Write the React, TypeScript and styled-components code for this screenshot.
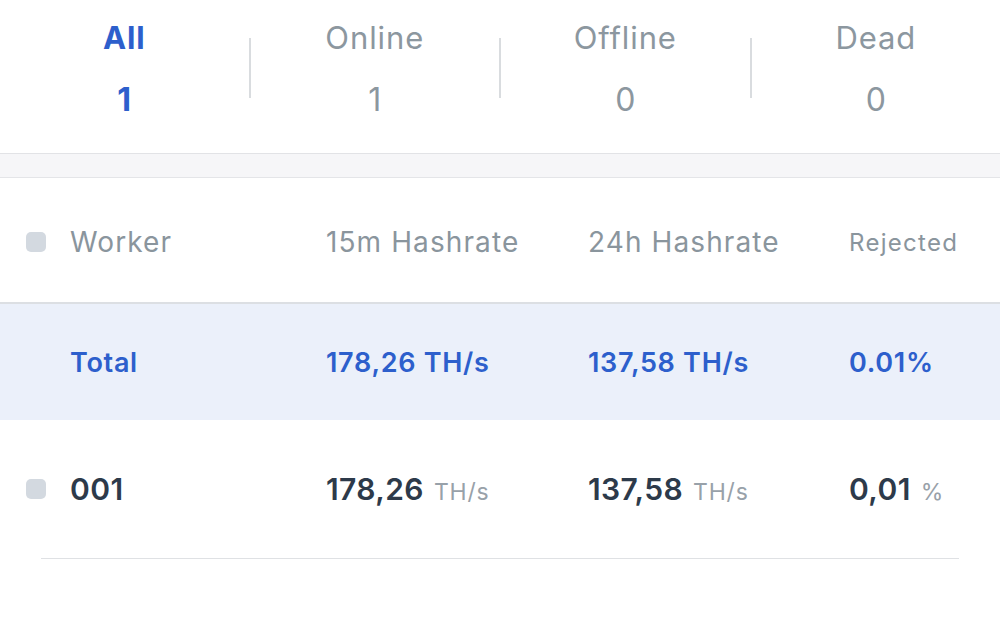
import * as React from 'react';
import styled, { createGlobalStyle } from 'styled-components';

const GlobalStyle = createGlobalStyle`
  html, body {
    margin: 0;
    padding: 0;
    background: #ffffff;
  }
  body {
    font-family: Inter, 'Open Sans', 'Liberation Sans', sans-serif;
    -webkit-font-smoothing: antialiased;
  }
`;

const Page = styled.div`
  width: 1000px;
  height: 627px;
  overflow: hidden;
  background: #fff;
`;

const Tabs = styled.div`
  display: flex;
  height: 153px;
`;

const Tab = styled.div<{ $active?: boolean }>`
  flex: 1;
  display: flex;
  flex-direction: column;
  align-items: center;
  padding-top: 18px;
  gap: 22px;
  color: ${p => (p.$active ? '#2d5fcc' : '#8c979f')};
  font-weight: ${p => (p.$active ? 700 : 400)};
`;

const TabLabel = styled.div`
  font-size: 31px;
  line-height: 40px;
  letter-spacing: 0.9px;
`;

const TabCount = styled.div`
  font-size: 32px;
  line-height: 40px;
`;

const Divider = styled.div`
  width: 2px;
  height: 60px;
  margin-top: 38px;
  background: #d9dcdf;
`;

const Band = styled.div`
  height: 23px;
  background: #f6f6f8;
  border-top: 1px solid #e2e3e6;
  border-bottom: 1px solid #e4e5e8;
`;

const Row = styled.div<{ $height: number; $bg?: string }>`
  display: grid;
  grid-template-columns: 44px 256px 262px 261px 1fr;
  align-items: center;
  padding-left: 26px;
  height: ${p => p.$height}px;
  background: ${p => p.$bg || 'transparent'};
  box-sizing: border-box;
`;

const HeaderRow = styled(Row)`
  border-bottom: 2px solid #dcdfe3;
  color: #8a959d;
  padding-top: 4px;
`;

const HeaderCell = styled.div<{ $small?: boolean }>`
  font-size: ${p => (p.$small ? '24px' : '28px')};
  letter-spacing: ${p => (p.$small ? '1.3px' : '1.1px')};
  white-space: nowrap;
`;

const TotalCell = styled.div`
  color: #2d5fcc;
  font-size: 27px;
  font-weight: 600;
  letter-spacing: 0.7px;
  white-space: nowrap;
`;

const Check = styled.div`
  width: 20px;
  height: 20px;
  border-radius: 5px;
  background: #d3d9e0;
`;

const ValueCell = styled.div`
  display: flex;
  align-items: baseline;
  gap: 10px;
  white-space: nowrap;
`;

const Value = styled.span`
  color: #2d3a4a;
  font-size: 30px;
  font-weight: 600;
  letter-spacing: 0.4px;
`;

const Unit = styled.span`
  color: #98a1a9;
  font-size: 23px;
  font-weight: 400;
  letter-spacing: 0.8px;
`;

const RowLine = styled.div`
  height: 1px;
  margin: 0 41px;
  background: #dfe1e4;
`;

const tabs = [
  { label: 'All', count: 1, active: true },
  { label: 'Online', count: 1 },
  { label: 'Offline', count: 0 },
  { label: 'Dead', count: 0 },
];

export default function App() {
  return (
    <Page>
      <GlobalStyle />
      <Tabs>
        {tabs.map((t, i) => (
          <React.Fragment key={t.label}>
            {i > 0 && <Divider />}
            <Tab $active={t.active}>
              <TabLabel>{t.label}</TabLabel>
              <TabCount>{t.count}</TabCount>
            </Tab>
          </React.Fragment>
        ))}
      </Tabs>
      <Band />
      <HeaderRow $height={126}>
        <Check />
        <HeaderCell>Worker</HeaderCell>
        <HeaderCell>15m Hashrate</HeaderCell>
        <HeaderCell>24h Hashrate</HeaderCell>
        <HeaderCell $small>Rejected</HeaderCell>
      </HeaderRow>
      <Row $height={116} $bg="#ebf0fa">
        <span />
        <TotalCell>Total</TotalCell>
        <TotalCell>178,26 TH/s</TotalCell>
        <TotalCell>137,58 TH/s</TotalCell>
        <TotalCell>0.01%</TotalCell>
      </Row>
      <Row $height={138}>
        <Check />
        <ValueCell>
          <Value>001</Value>
        </ValueCell>
        <ValueCell>
          <Value>178,26</Value>
          <Unit>TH/s</Unit>
        </ValueCell>
        <ValueCell>
          <Value>137,58</Value>
          <Unit>TH/s</Unit>
        </ValueCell>
        <ValueCell>
          <Value>0,01</Value>
          <Unit>%</Unit>
        </ValueCell>
      </Row>
      <RowLine />
    </Page>
  );
}
